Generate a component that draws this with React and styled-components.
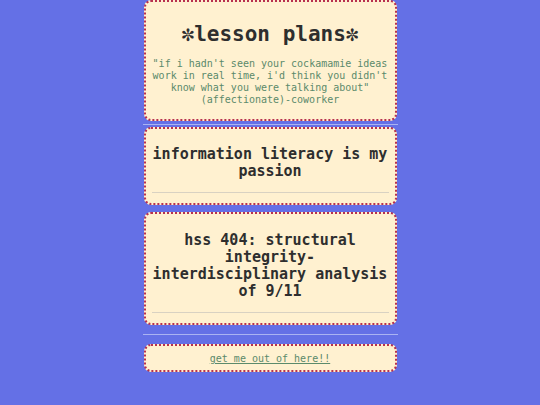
import React from "react";
import styled, { createGlobalStyle } from "styled-components";

const GlobalStyle = createGlobalStyle`
  html, body {
    margin: 0;
    padding: 0;
    background: #6470e6;
  }
  body {
    font-family: "DejaVu Sans Mono", monospace;
    color: #2e2e2e;
  }
`;

const Column = styled.main`
  width: 253px;
  margin: 0 auto;
  display: flex;
  flex-direction: column;
`;

const Card = styled.section`
  background: #fff1d0;
  border: 2px dotted #b8304e;
  border-radius: 7px;
  padding: ${(p) => p.$pad || "0 6px"};
  text-align: center;
  line-height: 12px;
  margin-top: ${(p) => p.$gap || 0}px;
`;

const Title = styled.h1`
  font-size: 21px;
  line-height: 26px;
  font-weight: bold;
  margin: 0;
`;

const Quote = styled.p`
  font-size: 10px;
  line-height: 12px;
  color: #5b8a6b;
  margin: 11px 0 0;
`;

const Heading = styled.h2`
  font-size: 15px;
  line-height: 17px;
  font-weight: bold;
  margin: 0;
`;

const Rule = styled.hr`
  border: none;
  border-top: 1px solid #d9d2c2;
  margin: 12px 0 0;
`;

const Divider = styled.hr`
  border: none;
  border-top: 1px solid #aab3f2;
  margin: ${(p) => p.$top}px -1px ${(p) => p.$bottom}px;
  height: 0;
`;

const ExitLink = styled.a`
  font-size: 10px;
  line-height: 12px;
  color: #5b8a6b;
  text-decoration: underline;
`;

const App = () => {
  return (
    <>
      <GlobalStyle />
      <Column>
        <Card $pad="19px 6px 13px">
          <Title>✼lesson plans✼</Title>
          <Quote>
            "if i hadn't seen your cockamamie ideas work in real time, i'd
            think you didn't know what you were talking about"
            <br />
            (affectionate)-coworker
          </Quote>
        </Card>
        <Divider $top={3} $bottom={2} />
        <Card $pad="17px 6px 10px">
          <Heading>information literacy is my passion</Heading>
          <Rule />
        </Card>
        <Card $pad="18px 6px 10px" $gap={7}>
          <Heading>hss 404: structural integrity-interdisciplinary analysis of 9/11</Heading>
          <Rule />
        </Card>
        <Divider $top={9} $bottom={9} />
        <Card $pad="5px 6px">
          <ExitLink href="#">get me out of here!!</ExitLink>
        </Card>
      </Column>
    </>
  );
};

export default App;
